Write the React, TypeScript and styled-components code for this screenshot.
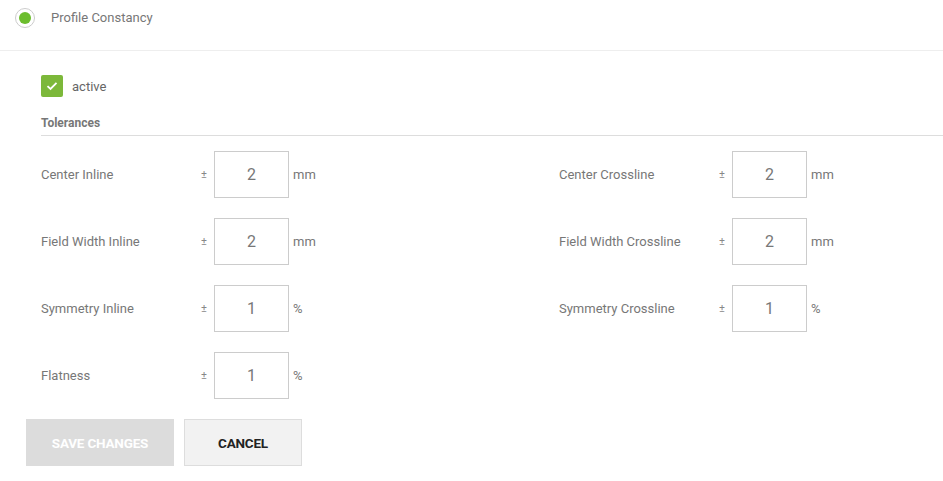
import styled, { createGlobalStyle } from 'styled-components';

const GlobalStyle = createGlobalStyle`
    body {
        margin: 0;
        background: #fff;
        font-family: Roboto, "Liberation Sans", sans-serif;
        color: #777;
    }
`;

const Header = styled.div`
    height: 51px;
    border-bottom: 1px solid #eee;
    display: flex;
    align-items: flex-start;
    padding: 8px 0 0 15px;
    box-sizing: border-box;
`;

const Radio = styled.span`
    width: 20px;
    height: 20px;
    border-radius: 50%;
    border: 1px solid #ccc;
    box-sizing: border-box;
    display: flex;
    align-items: center;
    justify-content: center;
    &::after {
        content: "";
        width: 12px;
        height: 12px;
        border-radius: 50%;
        background: #6cbd2e;
    }
`;

const Title = styled.span`
    font-size: 13px;
    color: #777;
    margin-left: 16px;
    line-height: 20px;
`;

const Content = styled.div`
    padding: 24px 0 0 41px;
`;

const CheckRow = styled.label`
    display: flex;
    align-items: center;
    gap: 9px;
    font-size: 13px;
    color: #666;
`;

const CheckBox = styled.span`
    width: 22px;
    height: 22px;
    border-radius: 2px;
    background: #7cb83a;
    display: flex;
    align-items: center;
    justify-content: center;
`;

const SectionTitle = styled.div`
    margin-top: 19px;
    font-size: 12px;
    font-weight: bold;
    color: #777;
    padding-bottom: 5px;
    border-bottom: 1px solid #ddd;
`;

const Grid = styled.div`
    display: grid;
    grid-template-columns: 518px 1fr;
    row-gap: 20px;
    margin-top: 15px;
`;

const Field = styled.div`
    display: flex;
    align-items: center;
    height: 47px;
`;

const Label = styled.span`
    width: 160px;
    font-size: 13px;
    color: #777;
`;

const Plus = styled.span`
    width: 13px;
    font-size: 11px;
    color: #888;
`;

const Input = styled.input`
    width: 75px;
    height: 47px;
    box-sizing: border-box;
    border: 1px solid #ccc;
    text-align: center;
    font-family: Roboto, "Liberation Sans", sans-serif;
    font-size: 16px;
    color: #777;
    padding: 0;
    outline: none;
`;

const Unit = styled.span`
    margin-left: 4px;
    font-size: 13px;
    color: #777;
`;

const Buttons = styled.div`
    display: flex;
    gap: 10px;
    padding: 20px 0 0 26px;
`;

const Button = styled.button<{ primary?: boolean }>`
    height: 47px;
    width: ${p => (p.primary ? '148px' : '118px')};
    padding: 0;
    box-sizing: border-box;
    font-family: Roboto, "Liberation Sans", sans-serif;
    font-size: 13.5px;
    font-weight: bold;
    letter-spacing: -0.2px;
    background: ${p => (p.primary ? '#dcdcdc' : '#f2f2f2')};
    color: ${p => (p.primary ? '#fff' : '#222')};
    border: 1px solid ${p => (p.primary ? '#dcdcdc' : '#ddd')};
`;

const fields: [string, string, string][] = [
    ['Center Inline', '2', 'mm'],
    ['Center Crossline', '2', 'mm'],
    ['Field Width Inline', '2', 'mm'],
    ['Field Width Crossline', '2', 'mm'],
    ['Symmetry Inline', '1', '%'],
    ['Symmetry Crossline', '1', '%'],
    ['Flatness', '1', '%'],
];

const App = () => {
    return (
        <>
            <GlobalStyle />
            <Header>
                <Radio />
                <Title>Profile Constancy</Title>
            </Header>
            <Content>
                <CheckRow>
                    <CheckBox>
                        <svg width="12" height="10" viewBox="0 0 12 10">
                            <path d="M1.5 5.2 L4.5 8 L10.5 1.8" fill="none" stroke="#fff" strokeWidth="1.8" />
                        </svg>
                    </CheckBox>
                    active
                </CheckRow>
                <SectionTitle>Tolerances</SectionTitle>
                <Grid>
                    {fields.map(([label, value, unit]) => (
                        <Field key={label}>
                            <Label>{label}</Label>
                            <Plus>±</Plus>
                            <Input defaultValue={value} />
                            <Unit>{unit}</Unit>
                        </Field>
                    ))}
                </Grid>
            </Content>
            <Buttons>
                <Button primary>SAVE CHANGES</Button>
                <Button>CANCEL</Button>
            </Buttons>
        </>
    );
};

export default App;
